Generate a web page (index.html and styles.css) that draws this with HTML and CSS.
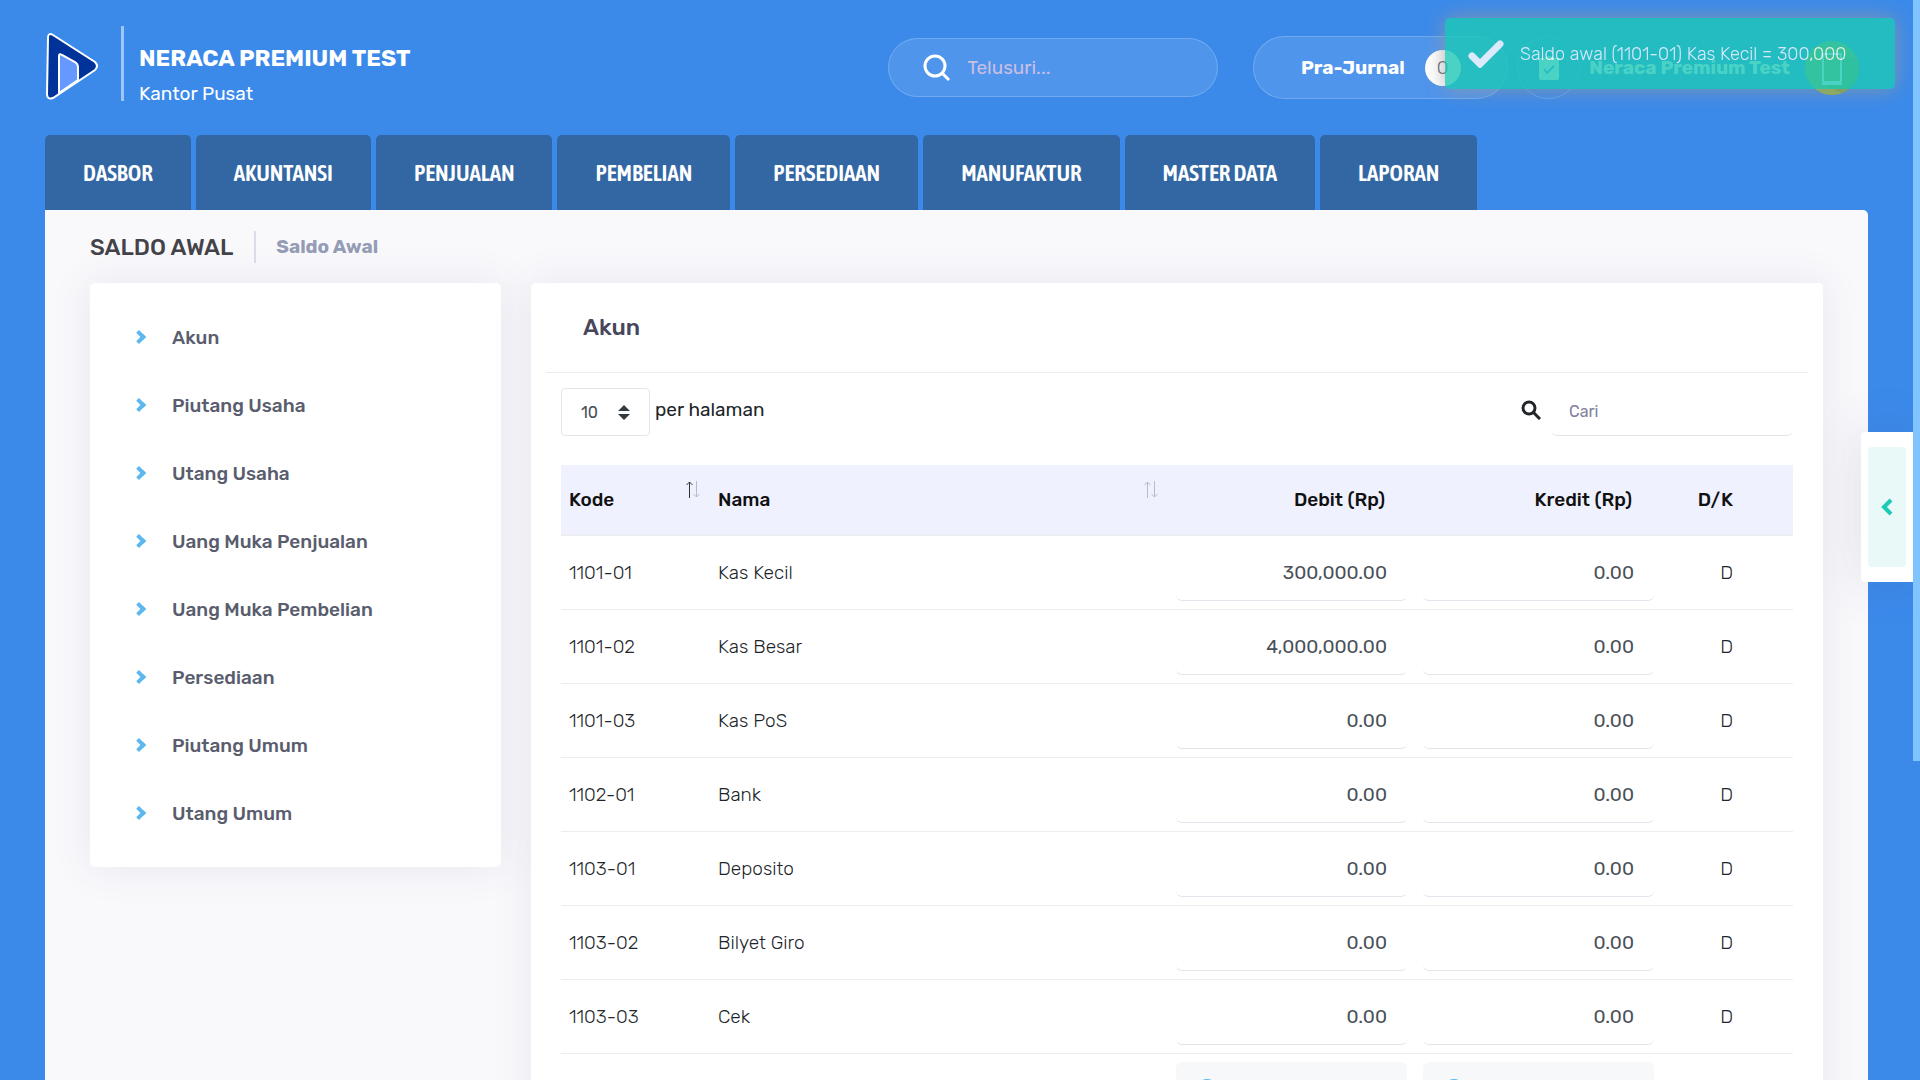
FILE: index.html
```html
<!DOCTYPE html>
<html lang="id">

<head>
  <meta charset="UTF-8">
  <meta name="viewport" content="width=device-width, initial-scale=1.0">
  <title>Saldo Awal</title>
  <link rel="stylesheet" href="styles.css">
</head>

<body>
  <header class="topbar">
    <a class="logo" href="#" aria-label="Neraca">
      <svg width="54" height="75" viewBox="0 0 54 75">
        <path d="M3 12 Q3 6 8 9 L50 36 Q54 40 50 44 L8 72 Q2 74 2 68 Z" fill="#003399" stroke="#fff" stroke-width="2" />
        <path d="M14 67 V30 Q14 27 17 29 L30 36 Q33 38 33 41 V54 Z" fill="#6699ff" stroke="#fff" stroke-width="2" />
      </svg>
    </a>
    <div class="company">
      <strong>NERACA PREMIUM TEST</strong>
      <span>Kantor Pusat</span>
    </div>
    <form class="search">
      <svg width="28" height="28" viewBox="0 0 28 28" fill="none" stroke="#fff" stroke-width="3">
        <circle cx="12" cy="12" r="10" />
        <path d="M19 19 L26 26" />
      </svg>
      <input type="text" placeholder="Telusuri..." aria-label="Telusuri">
    </form>
    <button type="button" class="pill">Pra-Jurnal <span class="count">0</span></button>
    <button type="button" class="round" aria-label="Tugas">
      <svg width="20" height="24" viewBox="0 0 20 24">
        <path d="M2 2 H6 Q7 0 10 0 Q13 0 14 2 H18 Q20 2 20 4 V22 Q20 24 18 24 H2 Q0 24 0 22 V4 Q0 2 2 2 Z" fill="#fff" />
        <path d="M5 13 L8 17 L15 10" fill="none" stroke="#4f97ee" stroke-width="2" />
      </svg>
    </button>
    <a class="user" href="#">Neraca Premium Test
      <svg width="54" height="54" viewBox="0 0 54 54">
        <circle cx="27" cy="27" r="27" fill="#8ab04b" />
        <path d="M36 13 L53 20 A27 27 0 0 1 37 52 L18 43 H36 Z" fill="#7ba043" />
        <rect x="18" y="13" width="18" height="30" fill="none" stroke="#fff" stroke-width="2" />
        <path d="M17 42 H37" stroke="#fff" stroke-width="4" />
      </svg>
    </a>
  </header>

  <nav class="menu">
    <a href="#">DASBOR</a>
    <a href="#">AKUNTANSI</a>
    <a href="#">PENJUALAN</a>
    <a href="#">PEMBELIAN</a>
    <a href="#">PERSEDIAAN</a>
    <a href="#">MANUFAKTUR</a>
    <a href="#">MASTER DATA</a>
    <a href="#">LAPORAN</a>
  </nav>

  <main class="content">
    <div class="subheader">
      <h1>SALDO AWAL</h1>
      <a href="#">Saldo Awal</a>
    </div>

    <div class="columns">
      <aside class="card side">
        <a href="#">Akun</a>
        <a href="#">Piutang Usaha</a>
        <a href="#">Utang Usaha</a>
        <a href="#">Uang Muka Penjualan</a>
        <a href="#">Uang Muka Pembelian</a>
        <a href="#">Persediaan</a>
        <a href="#">Piutang Umum</a>
        <a href="#">Utang Umum</a>
      </aside>

      <section class="card main">
        <h2>Akun</h2>
        <div class="tools">
          <label class="length"><select>
              <option>10</option>
              <option>25</option>
            </select> per halaman</label>
          <label class="filter">
            <svg width="20" height="20" viewBox="0 0 20 20" fill="none" stroke="#212529" stroke-width="3">
              <circle cx="8" cy="8" r="6" />
              <path d="M12 12 L19 19" />
            </svg>
            <input type="search" placeholder="Cari" aria-label="Cari">
          </label>
        </div>

        <table>
          <thead>
            <tr>
              <th class="kode">Kode</th>
              <th class="nama">Nama</th>
              <th class="num">Debit (Rp)</th>
              <th class="num">Kredit (Rp)</th>
              <th class="dk">D/K</th>
            </tr>
          </thead>
          <tbody id="rows"></tbody>
        </table>
      </section>
    </div>
  </main>

  <button type="button" class="panel-toggle" aria-label="Buka panel">
    <span><svg width="12" height="18" viewBox="0 0 12 18" fill="none" stroke="#1dc9b7" stroke-width="4">
        <path d="M10 2 L3 9 L10 16" />
      </svg></span>
  </button>

  <div class="toast" role="status">
    <svg width="36" height="28" viewBox="0 0 36 28" fill="none" stroke="#fff" stroke-width="7" stroke-linecap="round">
      <path d="M4 16 L12 24 L32 4" />
    </svg>
    Saldo awal (1101-01) Kas Kecil = 300,000
  </div>
  <div class="scroll-thumb"></div>

  <script>
    const akun = [
      ['1101-01', 'Kas Kecil', '300,000.00', '0.00'],
      ['1101-02', 'Kas Besar', '4,000,000.00', '0.00'],
      ['1101-03', 'Kas PoS', '0.00', '0.00'],
      ['1102-01', 'Bank', '0.00', '0.00'],
      ['1103-01', 'Deposito', '0.00', '0.00'],
      ['1103-02', 'Bilyet Giro', '0.00', '0.00'],
      ['1103-03', 'Cek', '0.00', '0.00']
    ];

    let html = '';
    akun.forEach(([kode, nama, debit, kredit]) => {
      html += `<tr>
        <td>${kode}</td>
        <td>${nama}</td>
        <td><input type="text" value="${debit}" aria-label="Debit ${nama}"></td>
        <td><input type="text" value="${kredit}" aria-label="Kredit ${nama}"></td>
        <td class="dk">D</td>
      </tr>`;
    });
    // baris yang masih dimuat
    html += `<tr>
      <td></td><td></td>
      <td><div class="loading"></div></td>
      <td><div class="loading"></div></td>
      <td></td>
    </tr>`;
    document.getElementById('rows').innerHTML = html;
  </script>
</body>

</html>
```

FILE: styles.css
```css
*,
*::before,
*::after {
  box-sizing: border-box;
}

body {
  font-family: Rubik, Roboto, sans-serif;
  font-size: 19px;
  margin: 0;
  padding: 0 52px 0 45px;
  height: 100vh;
  overflow: hidden;
  background-color: #3b8aea;
  color: #212529;
}

a {
  text-decoration: none;
  color: inherit;
}

button,
input,
select {
  font-family: inherit;
  font-size: 19px;
}

.topbar {
  display: flex;
  align-items: center;
  height: 135px;
  color: #fff;
}

.logo {
  display: flex;
  align-items: center;
  height: 75px;
  margin-top: -8px;
  padding-right: 22px;
  border-right: 3px solid rgba(255, 255, 255, 0.5);
}

.company {
  display: flex;
  flex-direction: column;
  gap: 10px;
  padding: 14px 0 0 15px;
  margin-right: auto;
}

.company strong {
  font-size: 23px;
  line-height: 28px;
}

.company span {
  line-height: 24px;
}

.search {
  display: flex;
  align-items: center;
  gap: 14px;
  width: 330px;
  height: 59px;
  padding: 0 34px;
  margin-right: 35px;
  border: 1px solid rgba(255, 255, 255, 0.2);
  border-radius: 30px;
  background-color: rgba(255, 255, 255, 0.1);
}

.search input {
  flex: 1;
  min-width: 0;
  border: none;
  background: none;
  color: #fff;
}

.search input::placeholder {
  color: #cbbfe4;
}

.pill,
.round {
  display: flex;
  align-items: center;
  justify-content: center;
  height: 63px;
  border: 1px solid rgba(255, 255, 255, 0.2);
  border-radius: 32px;
  background-color: rgba(255, 255, 255, 0.1);
  color: #fff;
}

.pill {
  width: 255px;
  gap: 20px;
  margin-right: 9px;
  font-weight: 700;
}

.count {
  width: 36px;
  line-height: 36px;
  border-radius: 50%;
  background-color: #fff;
  color: #595d6e;
  font-weight: 300;
}

.round {
  width: 63px;
  padding: 0;
  background: none;
}

.user {
  display: flex;
  align-items: center;
  gap: 15px;
  padding: 0 9px;
  font-weight: 700;
}

.menu {
  display: flex;
  gap: 5px;
}

.menu a {
  padding: 1px 38px 0;
  line-height: 74px;
  border-radius: 5px 5px 0 0;
  background-color: #3267a3;
  color: #fff;
  font-family: "Asap Condensed", Rubik, Roboto, sans-serif;
  font-size: 23px;
  font-weight: 600;
}

.content {
  padding: 0 45px;
  background-color: #f9f9fc;
  border-radius: 0 5px 0 0;
}

.subheader {
  display: flex;
  align-items: center;
  height: 73px;
}

.subheader h1 {
  margin: 0;
  padding-right: 21px;
  border-right: 2px solid #dcdde8;
  color: #434349;
  font-size: 23px;
  font-weight: 500;
  line-height: 32px;
}

.subheader a {
  padding-left: 20px;
  color: #959cb6;
  font-weight: 700;
}

.columns {
  display: flex;
  align-items: flex-start;
  gap: 30px;
}

.card {
  background-color: #fff;
  border-radius: 5px;
  box-shadow: 0 0 40px rgba(82, 63, 105, 0.1);
}

.side {
  flex: 0 0 411px;
  padding: 20px 44px;
}

.side a {
  display: flex;
  align-items: center;
  gap: 28px;
  height: 68px;
  color: #595d6e;
  font-weight: 500;
}

.side a::before {
  content: "";
  width: 10px;
  height: 10px;
  border: solid #5cb8ee;
  border-width: 4px 4px 0 0;
  transform: rotate(45deg);
}

.main {
  flex: 1;
  padding: 0 15px;
}

.main h2 {
  margin: 0;
  padding: 0 37px;
  border-bottom: 1px solid #ebedf2;
  color: #48465b;
  font-size: 23px;
  font-weight: 500;
  line-height: 89px;
}

.tools {
  display: flex;
  justify-content: space-between;
  padding: 15px 15px 29px;
}

.length,
.filter {
  display: flex;
  align-items: center;
  gap: 5px;
}

.length {
  align-items: flex-start;
  line-height: 44px;
}

.length select {
  appearance: none;
  width: 89px;
  height: 48px;
  padding: 0 19px;
  border: 1px solid #e2e5ec;
  border-radius: 4px;
  background: url("data:image/svg+xml,%3Csvg xmlns='http://www.w3.org/2000/svg' viewBox='0 0 4 5'%3E%3Cpath fill='%23343a40' d='M2 0L0 2h4zm0 5L0 3h4z'/%3E%3C/svg%3E") no-repeat right 19px center / 12px 15px;
  color: #495057;
  font-size: 16px;
}

.filter {
  gap: 10px;
}

.filter svg {
  margin-bottom: 4px;
}

.filter input {
  width: 242px;
  height: 48px;
  padding: 0 18px;
  font-size: 16px;
}

.filter input,
td input {
  border: solid transparent;
  border-width: 0 0 1px;
  border-bottom-color: #e2e5ec;
  border-radius: 6px;
  background: none;
  color: #495057;
}

.filter input::placeholder {
  color: #8281a0;
}

table {
  width: calc(100% - 30px);
  margin: 0 15px;
  border-collapse: collapse;
  table-layout: fixed;
}

th {
  height: 70px;
  padding: 0 8px;
  border-bottom: 2px solid #ebedf2;
  background-color: #f0f1ff;
  color: #111;
  font-weight: 500;
  text-align: left;
}

/* panah urutan */
.kode {
  width: 149px;
  background: #f0f1ff url("data:image/svg+xml,%3Csvg xmlns='http://www.w3.org/2000/svg' viewBox='0 0 16 20' fill='none'%3E%3Cpath stroke='%23333' d='M4.5 18V2M1.5 5l3-3 3 3'/%3E%3Cpath stroke='%23b9bac8' d='M11.5 1v16M8.5 14l3 3 3-3'/%3E%3C/svg%3E") no-repeat right 9px top 15px / 16px 20px;
}

.nama {
  background: #f0f1ff url("data:image/svg+xml,%3Csvg xmlns='http://www.w3.org/2000/svg' viewBox='0 0 16 20' fill='none' stroke='%23b9bac8'%3E%3Cpath d='M4.5 18V2M1.5 5l3-3 3 3M11.5 1v16M8.5 14l3 3 3-3'/%3E%3C/svg%3E") no-repeat right 9px top 15px / 16px 20px;
}

.num {
  width: 247px;
  padding-right: 30px;
  text-align: right;
}

.dk {
  width: 131px;
  padding-right: 60px;
  text-align: right;
}

td {
  height: 74px;
  padding: 8px;
  border-bottom: 1px solid #ebedf2;
  font-weight: 300;
}

td.dk {
  padding-right: 60px;
}

td input {
  display: block;
  width: 100%;
  height: 57px;
  padding: 0 20px;
  text-align: right;
}

.loading {
  height: 57px;
  padding: 17px 20px;
  border-radius: 6px;
  background-color: #f7f8fa;
}

.loading::before {
  content: "";
  display: block;
  width: 22px;
  height: 22px;
  border: 3px solid #5cb8ee;
  border-radius: 50%;
}

.panel-toggle {
  position: fixed;
  top: 432px;
  right: 7px;
  width: 52px;
  height: 150px;
  padding: 15px 7px;
  border: none;
  border-radius: 4px 0 0 4px;
  background-color: #fff;
  box-shadow: 0 0 50px rgba(82, 63, 105, 0.15);
}

.panel-toggle span {
  display: flex;
  align-items: center;
  justify-content: center;
  height: 100%;
  border-radius: 4px;
  background-color: #e8f9f7;
}

.toast {
  position: fixed;
  top: 18px;
  right: 25px;
  display: flex;
  align-items: center;
  gap: 16px;
  width: 450px;
  height: 71px;
  padding: 0 23px;
  border-radius: 5px;
  background-color: #1dc9b7;
  box-shadow: 0 0 20px #999;
  color: #fff;
  font-size: 18px;
  font-weight: 300;
  opacity: 0.8;
}

.scroll-thumb {
  position: fixed;
  top: 0;
  right: 0;
  width: 7px;
  height: 761px;
  background-color: #7fc4ff;
}
```
